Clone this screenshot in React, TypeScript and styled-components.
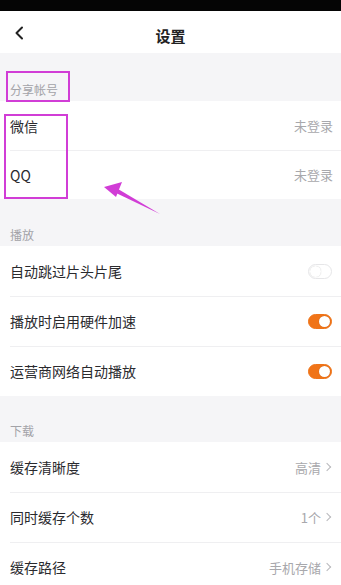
import React from 'react'
import styled, { createGlobalStyle } from 'styled-components'

const GlobalStyle = createGlobalStyle`
    html, body {
        margin: 0;
        padding: 0;
        background: #f5f5f7;
    }
    body {
        font-family: 'Noto Sans CJK SC', 'Noto Sans', 'Liberation Sans', sans-serif;
        -webkit-font-smoothing: antialiased;
    }
`

const Page = styled.div`
    position: relative;
    width: 341px;
    height: 585px;
    overflow: hidden;
    display: flex;
    flex-direction: column;
    background: #f5f5f7;
`

const StatusBar = styled.div`
    height: 11px;
    background: #050505;
    flex-shrink: 0;
`

const Header = styled.div`
    height: 42px;
    flex-shrink: 0;
    background: #fff;
    display: grid;
    grid-template-columns: 40px 1fr 40px;
    align-items: center;
`

const BackButton = styled.div`
    display: flex;
    align-items: center;
    padding-left: 14px;
    padding-top: 2px;
`

const Title = styled.div`
    text-align: center;
    font-size: 15px;
    font-weight: 600;
    color: #222;
    padding-top: 6px;
`

const SectionHeader = styled.div<{ $height?: number }>`
    height: ${p => p.$height ?? 47}px;
    flex-shrink: 0;
    display: flex;
    align-items: flex-end;
    padding: 0 10px 4px;
    box-sizing: border-box;
    font-size: 12px;
    line-height: 14px;
    color: #a3a3a8;
`

const Group = styled.div`
    background: #fff;
    flex-shrink: 0;
`

const Row = styled.div<{ $height?: number }>`
    height: ${p => p.$height ?? 50}px;
    display: flex;
    align-items: center;
    justify-content: space-between;
    padding: 0 8px 0 10px;
    box-sizing: border-box;
    position: relative;

    & + &::before {
        content: '';
        position: absolute;
        top: 0;
        left: 10px;
        right: 0;
        height: 1px;
        background: #efeff1;
    }
`

const Label = styled.span`
    font-size: 14px;
    color: #2a2a2e;
`

const Value = styled.span`
    display: flex;
    align-items: center;
    gap: 3px;
    font-size: 13px;
    color: #a8a8ac;
`

const Chevron = styled.span`
    width: 5px;
    height: 5px;
    border-right: 1px solid #b8b8bc;
    border-top: 1px solid #b8b8bc;
    transform: rotate(45deg);
    margin-right: 3px;
`

const Toggle = styled.span<{ $on: boolean }>`
    width: 24px;
    height: 15px;
    border-radius: 8px;
    box-sizing: border-box;
    background: ${p => (p.$on ? '#f07418' : '#fff')};
    border: 1px solid ${p => (p.$on ? '#f07418' : '#e6e6e8')};
    display: flex;
    align-items: center;
    justify-content: ${p => (p.$on ? 'flex-end' : 'flex-start')};
    padding: 0 1px;
    margin-right: 1px;

    &::after {
        content: '';
        width: 11px;
        height: 11px;
        border-radius: 50%;
        background: #fff;
        box-shadow: 0 0 1px rgba(0, 0, 0, 0.25);
    }
`

const Highlight = styled.div<{ $x: number; $y: number; $w: number; $h: number }>`
    position: absolute;
    left: ${p => p.$x}px;
    top: ${p => p.$y}px;
    width: ${p => p.$w}px;
    height: ${p => p.$h}px;
    border: 2px solid #d13dd6;
    box-sizing: border-box;
    pointer-events: none;
`

const ArrowLayer = styled.svg`
    position: absolute;
    left: 0;
    top: 0;
    pointer-events: none;
`

type Item = { label: string; value?: string; chevron?: boolean; toggle?: boolean }

const account: Item[] = [
    { label: '微信', value: '未登录' },
    { label: 'QQ', value: '未登录' }
]

const play: Item[] = [
    { label: '自动跳过片头片尾', toggle: false },
    { label: '播放时启用硬件加速', toggle: true },
    { label: '运营商网络自动播放', toggle: true }
]

const download: Item[] = [
    { label: '缓存清晰度', value: '高清', chevron: true },
    { label: '同时缓存个数', value: '1个', chevron: true },
    { label: '缓存路径', value: '手机存储', chevron: true }
]

const SettingRow = ({ item, height }: { item: Item; height?: number }) => (
    <Row $height={height}>
        <Label>{item.label}</Label>
        {item.toggle !== undefined ? (
            <Toggle $on={item.toggle} />
        ) : (
            <Value>
                {item.value}
                {item.chevron && <Chevron />}
            </Value>
        )}
    </Row>
)

const App = () => (
    <Page>
        <GlobalStyle />
        <StatusBar />
        <Header>
            <BackButton>
                <svg width='10' height='14' viewBox='0 0 10 14'>
                    <path d='M8 1.5 L2.5 7 L8 12.5' fill='none' stroke='#222' strokeWidth='2' strokeLinecap='round' strokeLinejoin='round' />
                </svg>
            </BackButton>
            <Title>设置</Title>
            <span />
        </Header>

        <SectionHeader $height={48}>分享帐号</SectionHeader>
        <Group>
            {account.map(item => (
                <SettingRow key={item.label} item={item} height={49} />
            ))}
        </Group>

        <SectionHeader>播放</SectionHeader>
        <Group>
            {play.map(item => (
                <SettingRow key={item.label} item={item} />
            ))}
        </Group>

        <SectionHeader $height={46}>下载</SectionHeader>
        <Group>
            {download.map(item => (
                <SettingRow key={item.label} item={item} />
            ))}
        </Group>

        <Highlight $x={6} $y={71} $w={64} $h={31} />
        <Highlight $x={4} $y={114} $w={64} $h={85} />
        <ArrowLayer width='341' height='585' viewBox='0 0 341 585'>
            <path d='M160 214 L116 193 L118 189 Z' fill='#d13dd6' />
            <path d='M104 187 L122 182 L116 197 Z' fill='#d13dd6' />
        </ArrowLayer>
    </Page>
)

export default App
